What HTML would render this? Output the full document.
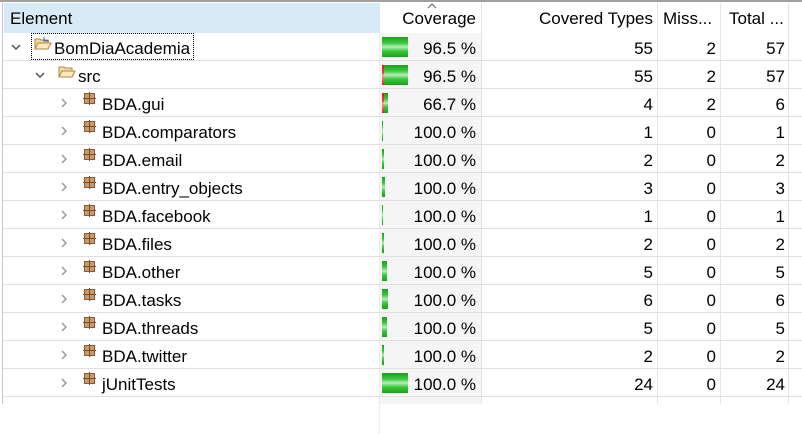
<!DOCTYPE html>
<html><head><style>
body{margin:0;width:802px;height:404px;background:#fff;font-family:"Liberation Sans",sans-serif;font-size:17px;color:#000;position:relative;overflow:hidden}
.top{position:absolute;left:0;top:0;width:802px;height:2px;background:#a0a0a0}
.lb{position:absolute;left:2px;top:2px;width:1px;height:402px;background:#c8c8d8}
.hdr{position:absolute;top:4px;height:30px;line-height:30px}
.row{position:absolute;left:3px;width:799px;height:28px;border-bottom:1px solid #e0e0e0;box-sizing:border-box}
.c{position:absolute;top:2px;height:27px;line-height:27px;white-space:nowrap}
.r{text-align:right}
.vl{position:absolute;top:3px;width:1px;height:401px;background:#e6e6e6}
.bar{position:absolute;top:4px;height:20px;background:linear-gradient(#1e9e1e,#3cc83c 30%,#b8ecb8 50%,#3cc83c 70%,#1e9e1e)}
.red{position:absolute;top:4px;height:20px;background:linear-gradient(#d02020,#f04040 40%,#f8a0a0 50%,#e02020)}
.chev{position:absolute;top:9px}
.pk{position:absolute;top:4px;width:11px;height:11px;background:#c99a6e;border:1px solid #8a5a30;box-sizing:border-box}
.pk:before{content:"";position:absolute;left:4px;top:-2px;width:1px;height:13px;background:#7a4a20}
.pk:after{content:"";position:absolute;top:4px;left:-2px;height:1px;width:13px;background:#7a4a20}
</style></head><body>
<div class="top"></div><div class="lb"></div>
<div style="position:absolute;left:380px;top:33px;width:101px;height:371px;background:#f5f5f5"></div>
<div class="hdr" style="left:4px;width:376px;top:3px;height:30px;background:#d9eaf7;padding-left:6px;box-sizing:border-box;line-height:32px">Element</div>
<div class="hdr r" style="left:380px;width:96px">Coverage</div>
<svg style="position:absolute;left:427px;top:3px" width="10" height="6"><path d="M1 5l4-4 4 4" fill="none" stroke="#666"/></svg>
<div class="hdr r" style="left:482px;width:171px">Covered Types</div>
<div class="hdr" style="left:663px">Miss...</div>
<div class="hdr" style="left:729px">Total ...</div>
<div class="vl" style="left:481px"></div>
<div class="vl" style="left:657px"></div>
<div class="vl" style="left:720px"></div>
<div class="vl" style="left:788px"></div>
<div class="vl" style="left:379px;top:33px;background:#eee"></div>
<div id="rows"></div>
<script>
var d=[[0,"BomDiaAcademia","96.5 %",55,2,57,26,0],[1,"src","96.5 %",55,2,57,26,2],
[2,"BDA.gui","66.7 %",4,2,6,6,2],[2,"BDA.comparators","100.0 %",1,0,1,1,0],[2,"BDA.email","100.0 %",2,0,2,2,0],
[2,"BDA.entry_objects","100.0 %",3,0,3,3,0],[2,"BDA.facebook","100.0 %",1,0,1,1,0],[2,"BDA.files","100.0 %",2,0,2,2,0],
[2,"BDA.other","100.0 %",5,0,5,5,0],[2,"BDA.tasks","100.0 %",6,0,6,6,0],[2,"BDA.threads","100.0 %",5,0,5,5,0],
[2,"BDA.twitter","100.0 %",2,0,2,2,0],[2,"jUnitTests","100.0 %",24,0,24,26,0]];
var h="";
d.forEach(function(e,i){
 var t=33+28*i,lv=e[0],cx=8+lv*24,ix=31+lv*24+(lv==2?2:0),tx=51+lv*24;
 h+='<div class="row" style="top:'+t+'px">';
 if(lv<2) h+='<svg class="chev" style="left:'+cx+'px;top:11px" width="10" height="6"><path d="M1 1l4 4 4-4" fill="none" stroke="#555" stroke-width="1.5"/></svg>';
 else h+='<svg class="chev" style="left:'+(cx+2)+'px" width="6" height="10"><path d="M1 1l4 4-4 4" fill="none" stroke="#999" stroke-width="1.5"/></svg>';
 if(lv==2) h+='<div class="pk" style="left:'+ix+'px"></div>';
 else h+='<svg style="position:absolute;left:'+ix+'px;top:3px" width="18" height="14"><path d="M1 3h5l1 1h7v9H1z" fill="#f4d9a0" stroke="#b08840"/><path d="M1 13l3-6h13l-3 6z" fill="#fbe9c0" stroke="#b08840"/>'+(lv==0?'<path d="M10 1v4h5" fill="none" stroke="#3060c0"/>':'')+'</svg>';
 h+='<div class="c" style="left:'+tx+'px">'+e[1]+'</div>';
 var w=e[6],rw=e[7];
 h+='<div class="bar" style="left:379px;width:'+w+'px"></div>';
 if(rw) h+='<div class="red" style="left:379px;width:'+rw+'px"></div>';
 h+='<div class="c r" style="left:377px;width:96px">'+e[2]+'</div>';
 h+='<div class="c r" style="left:479px;width:171px">'+e[3]+'</div>';
 h+='<div class="c r" style="left:654px;width:59px">'+e[4]+'</div>';
 h+='<div class="c r" style="left:717px;width:65px">'+e[5]+'</div>';
 h+='</div>';});
document.getElementById("rows").innerHTML=h;
</script>
<div style="position:absolute;left:31px;top:33px;width:163px;height:27px;border:1px dotted #000;box-sizing:border-box"></div>
</body></html>
